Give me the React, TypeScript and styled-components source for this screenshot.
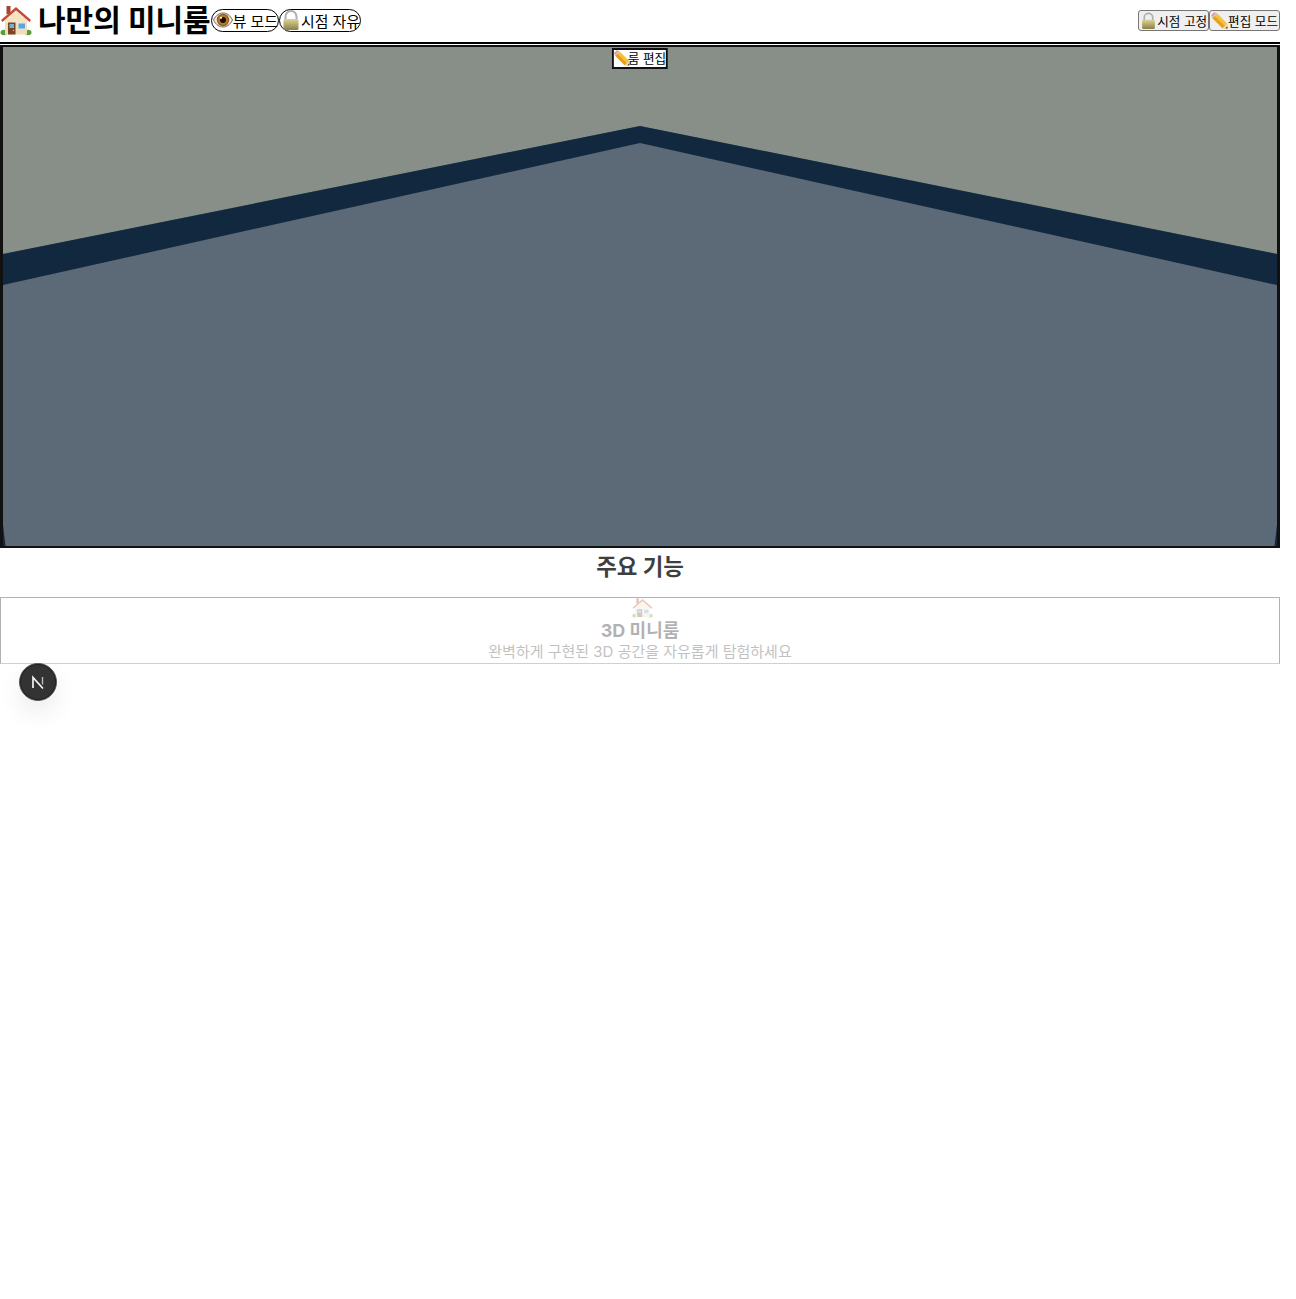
import { useId } from "react";
import styled, { createGlobalStyle } from "styled-components";

const GlobalStyle = createGlobalStyle`
  html, body {
    margin: 0;
    padding: 0;
    background: #ffffff;
    min-height: 1299px;
  }
  body {
    font-family: Inter, "Noto Sans CJK KR", sans-serif;
    color: #000;
  }
  * {
    box-sizing: border-box;
  }
`;

function HouseIcon({ size }: { size: number }) {
  return (
    <svg width={size} height={size} viewBox="0 0 32 32">
      <ellipse cx="4" cy="28.500" rx="3.500" ry="2.800" fill="#5d9c3b" />
      <ellipse cx="28" cy="28.500" rx="3.500" ry="2.800" fill="#5d9c3b" />
      <path d="M5 13h22v17.500H5z" fill="#f2dcb6" />
      <path d="M6.500 2h4v8h-4z" fill="#a8432f" />
      <path d="M16 3 1 16l1.500 2L16 6.500 29.500 18l1.500-2z" fill="#c64a3a" />
      <path d="M16 6.500 5 16v3h22v-3z" fill="#f6e3bf" />
      <path d="M8 18.500h7.500v12H8z" fill="#7a4426" />
      <path d="M9.500 20h4.500v4h-4.500z" fill="#6fb2dc" />
      <circle cx="13.500" cy="26.500" r=".7" fill="#e8c060" />
      <path d="M17.500 18.500h8.500v7h-8.500z" fill="#dfe6e6" />
      <path d="M18.500 19.500h6.500v5h-6.500z" fill="#5aa6dc" />
    </svg>
  );
}

function EyeIcon({ size }: { size: number }) {
  return (
    <svg width={size} height={size} viewBox="0 0 20 20">
      <path
        d="M.5 10C3 5 6.500 3 10 3s7 2 9.500 7c-2.500 5-6 7-9.500 7s-7-2-9.500-7z"
        fill="#f3e9e0"
        stroke="#6e5648"
        strokeWidth=".9"
      />
      <circle cx="10" cy="10" r="6.200" fill="#8f5c1c" />
      <circle cx="10" cy="10" r="5" fill="#b57a2a" />
      <circle cx="10" cy="10" r="3" fill="#1a0f08" />
      <circle cx="8" cy="7.800" r="1.100" fill="#fff" />
    </svg>
  );
}

function LockIcon({ size, open }: { size: number; open?: boolean }) {
  const id = useId();
  return (
    <svg width={size} height={size} viewBox="0 0 20 20">
      <defs>
        <linearGradient id={id} x1="0" y1="0" x2="0" y2="1">
          <stop offset="0" stopColor="#dcd49a" />
          <stop offset="1" stopColor="#8c8044" />
        </linearGradient>
      </defs>
      <path
        d={open ? "M4.500 10V6.500a5.500 5.500 0 0 1 11 0V10" : "M5 10V6.500a5 5 0 0 1 10 0V10"}
        fill="none"
        stroke="#a9afb3"
        strokeWidth="2"
      />
      <rect x="2.500" y="9" width="15" height="11" rx="1.500" fill={`url(#${id})`} />
    </svg>
  );
}

function PencilIcon({ size }: { size: number }) {
  return (
    <svg width={size} height={size} viewBox="0 0 20 20">
      <path d="M7 1.500 1.500 7l12 12 6 .5-.5-6z" fill="#f6c23c" />
      <path d="M4.200 4.300 16.400 16.500l-2.900 2.500L1.500 7z" fill="#e89f1e" />
      <path d="M3.800.3.300 3.800 1.500 7 7 1.500z" fill="#ec8f94" />
      <path d="M5.700 1 1 5.700l1.300 1.300L7 2.300z" fill="#c4cbd0" />
      <path d="M13.500 19l6 .5-.5-6z" fill="#f0d6a8" />
      <path d="M17 19.200l2.500.3-.3-2.500z" fill="#3a3030" />
    </svg>
  );
}

export default function App() {
  return (
    <Page>
      <GlobalStyle />
      <Header>
        <HeaderLeft>
          <Title>
            <HouseIcon size={32} />
            나만의 미니룸
          </Title>
          <PillButton>
            <EyeIcon size={20} />뷰 모드
          </PillButton>
          <PillButton>
            <LockIcon size={20} open />시점 자유
          </PillButton>
        </HeaderLeft>
        <HeaderRight>
          <SquareButton>
            <LockIcon size={17} />시점 고정
          </SquareButton>
          <SquareButton>
            <PencilIcon size={17} />편집 모드
          </SquareButton>
        </HeaderRight>
      </Header>

      <Viewport>
        <Scene viewBox="0 0 1274 499" preserveAspectRatio="none">
          <rect width="1274" height="499" fill="#5c6976" />
          <polygon points="0,0 1274,0 1274,207 637,79 0,207" fill="#888f88" />
          <polygon points="0,207 637,79 1274,207 1274,238 637,96 0,238" fill="#12283f" />
          <polygon points="0,478 2.500,499 0,499" fill="#12283f" />
          <polygon points="1274,478 1271.500,499 1274,499" fill="#12283f" />
        </Scene>
        <RoomEditButton>
          <PencilIcon size={16} />룸 편집
        </RoomEditButton>
      </Viewport>

      <Features>
        <FeaturesTitle>주요 기능</FeaturesTitle>
        <FeatureCard>
          <FeatureIcon>
            <HouseIcon size={21} />
          </FeatureIcon>
          <FeatureName>3D 미니룸</FeatureName>
          <FeatureText>완벽하게 구현된 3D 공간을 자유롭게 탐험하세요</FeatureText>
        </FeatureCard>
      </Features>

      <DevBadge>
        <svg width="16" height="16" viewBox="0 0 16 16">
          <path d="M3 14V3.500L13 14.500" fill="none" stroke="#f4f4f4" strokeWidth="1.700" />
          <path d="M12.500 3v7.500" stroke="#bdbdbd" strokeWidth="1.400" />
        </svg>
      </DevBadge>
    </Page>
  );
}

const Page = styled.div`
  position: relative;
  width: 1280px;
`;

const Header = styled.header`
  display: flex;
  align-items: center;
  justify-content: space-between;
  height: 44px;
  padding-bottom: 2px;
  border-bottom: 2px solid #000;
`;

const HeaderLeft = styled.div`
  display: flex;
  align-items: center;
`;

const HeaderRight = styled.div`
  display: flex;
  align-items: center;
  padding-top: 1px;
`;

const Title = styled.h1`
  display: flex;
  align-items: center;
  gap: 6px;
  margin: 0;
  font-size: 30px;
  font-weight: 700;
  line-height: 40px;
`;

const PillButton = styled.button`
  display: flex;
  align-items: center;
  height: 23px;
  padding: 0 0 0 1px;
  background: #fff;
  border: 1px solid #000;
  border-radius: 12px;
  font-family: inherit;
  font-size: 14.900px;
  color: #000;
  white-space: nowrap;
`;

const SquareButton = styled.button`
  display: flex;
  align-items: center;
  height: 21px;
  padding: 0 1px;
  background: #efefef;
  border: 1px solid #767676;
  border-radius: 3px;
  font-family: inherit;
  font-size: 12.600px;
  color: #000;
  white-space: nowrap;
`;

const Viewport = styled.section`
  position: relative;
  height: 503px;
  margin-top: 1px;
  border-style: solid;
  border-color: #111;
  border-width: 2px 3px;
`;

const Scene = styled.svg`
  display: block;
  width: 100%;
  height: 100%;
`;

const RoomEditButton = styled.button`
  position: absolute;
  top: 1px;
  left: 50%;
  transform: translateX(-50%);
  display: flex;
  align-items: center;
  height: 21px;
  padding: 0 0 2px;
  background: #fff;
  border: 2px solid #111;
  font-family: inherit;
  font-size: 12.600px;
  color: #000;
  white-space: nowrap;

  svg {
    margin-right: -2px;
  }
`;

const Features = styled.section`
  display: flex;
  flex-direction: column;
  align-items: center;
`;

const FeaturesTitle = styled.h2`
  margin: 2px 0 13px;
  font-size: 22.400px;
  font-weight: 700;
  line-height: 34px;
  color: #3f3f3f;
`;

const FeatureCard = styled.div`
  display: flex;
  flex-direction: column;
  align-items: center;
  width: 100%;
  height: 67px;
  border: 1px solid #000;
  border-bottom-color: #666;
  opacity: 0.3;
`;

const FeatureIcon = styled.div`
  display: flex;
  height: 22px;
  padding-left: 4px;

  svg {
    margin-top: -1px;
  }
`;

const FeatureName = styled.div`
  font-size: 18px;
  font-weight: 700;
  line-height: 22px;
  color: #000;
`;

const FeatureText = styled.div`
  font-size: 15px;
  line-height: 20px;
  color: #333;
`;

const DevBadge = styled.div`
  position: absolute;
  top: 663px;
  left: 19px;
  display: flex;
  align-items: center;
  justify-content: center;
  width: 38px;
  height: 38px;
  border-radius: 50%;
  background: #333;
  border: 1px solid #5a5a5a;
  outline: 1px solid #222;
  outline-offset: -2px;
  box-shadow: 0 12px 24px rgba(0, 0, 0, 0.08);
`;
